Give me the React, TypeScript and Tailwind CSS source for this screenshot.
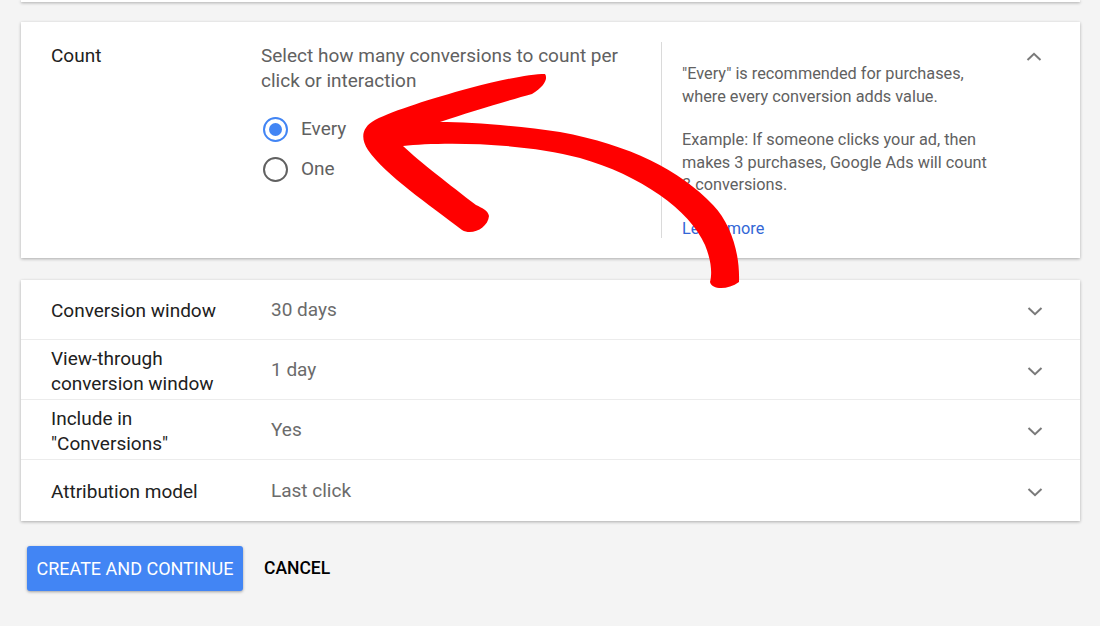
import React from "react";

const Chevron: React.FC<{ up?: boolean }> = ({ up }) => (
  <svg
    viewBox="0 0 24 24"
    className="w-6 h-6 shrink-0"
    fill="none"
    stroke="#7a7a7a"
    strokeWidth="2"
  >
    {up ? <path d="M5.5 15 12 8.8 18.5 15" /> : <path d="M5.5 9 12 15.2 18.5 9" />}
  </svg>
);

const Radio: React.FC<{ checked?: boolean; label: string }> = ({ checked, label }) => (
  <label className="flex items-center h-10 gap-[13px] ml-[2px] text-[19px] text-[#616161]">
    <span
      className={
        checked
          ? "w-[25px] h-[25px] rounded-full border-2 border-[#4285f4] flex items-center justify-center"
          : "w-[25px] h-[25px] rounded-full border-2 border-[#616161] flex items-center justify-center"
      }
    >
      {checked && <span className="w-[13px] h-[13px] rounded-full bg-[#4285f4]" />}
    </span>
    {label}
  </label>
);

type SettingRow = {
  label: React.ReactNode;
  value: string;
};

const rows: SettingRow[] = [
  { label: "Conversion window", value: "30 days" },
  {
    label: (
      <>
        View-through
        <br />
        conversion window
      </>
    ),
    value: "1 day",
  },
  {
    label: (
      <>
        Include in
        <br />
        "Conversions"
      </>
    ),
    value: "Yes",
  },
  { label: "Attribution model", value: "Last click" },
];

// hand-drawn annotation arrow over the count section
const RedArrow: React.FC = () => (
  <svg
    viewBox="0 0 1100 626"
    className="absolute inset-0 w-[1100px] h-[626px] pointer-events-none"
  >
    <path
      fill="#ff0000"
      d="M545,74
         C530,74 500,80 470,88
         C430,99 395,110 375,120
         C362,127 360,138 368,150
         C385,175 430,205 462,230
         C472,236 488,228 489,216
         C488,210 482,208 476,205
         C450,185 420,162 403,146
         C440,142 520,142 580,158
         C640,175 690,210 705,245
         C712,262 712,275 710,282
         C712,290 728,290 739,282
         C740,255 732,225 713,205
         C680,170 630,145 560,132
         C520,126 470,122 440,122
         C470,112 510,100 532,94
         C545,86 548,78 545,74 Z"
    />
  </svg>
);

export default function App() {
  return (
    <div className="relative w-[1100px] h-[626px] overflow-hidden bg-[#f4f4f4] font-['Roboto',sans-serif]">
      <div className="pr-[20px] pl-[21px]">
        <div className="h-[2px] bg-white shadow-[0_1px_3px_rgba(0,0,0,0.35)]" />

        {/* Count section, expanded */}
        <div className="mt-5 h-[236px] bg-white shadow-[0_1px_3px_rgba(0,0,0,0.3)] flex py-5">
          <div className="w-[240px] pl-[30px] pt-[1px] text-[19px] leading-[25px] text-[#212121]">
            Count
          </div>
          <div className="w-[400px] pr-5">
            <p className="text-[19px] leading-[25px] text-[#616161] pt-[1px]">
              Select how many conversions to count per click or interaction
            </p>
            <div className="mt-[16px] flex flex-col">
              <Radio checked label="Every" />
              <Radio label="One" />
            </div>
          </div>
          <div className="border-l border-[#dadada] pl-5 pt-[21px] w-[333px] text-[16.3px] leading-[22.5px] text-[#616161]">
            <p>"Every" is recommended for purchases, where every conversion adds value.</p>
            <p className="mt-[21px]">
              Example: If someone clicks your ad, then makes 3 purchases, Google Ads will count 3
              conversions.
            </p>
            <a className="block mt-[21px] text-[#3367d6]">Learn more</a>
          </div>
          <div className="flex-1 flex justify-end pr-[34px]">
            <div className="mt-[3px]">
              <Chevron up />
            </div>
          </div>
        </div>

        {/* Collapsed settings */}
        <div className="mt-[22px] bg-white shadow-[0_1px_3px_rgba(0,0,0,0.3)]">
          {rows.map((row, i) => (
            <div
              key={i}
              className={
                i < rows.length - 1
                  ? "h-[60px] flex items-center pt-[2px] border-b border-[#ececec]"
                  : "h-[61px] flex items-center pt-[2px]"
              }
            >
              <div className="w-[250px] pl-[30px] text-[19px] leading-[25px] text-[#212121]">
                {row.label}
              </div>
              <div className="flex-1 text-[19px] text-[#6b6b6b]">{row.value}</div>
              <div className="pr-[33px]">
                <Chevron />
              </div>
            </div>
          ))}
        </div>

        <div className="mt-[25px] flex items-center gap-[21px] pl-[6px]">
          <button className="h-[45px] w-[216px] bg-[#4285f4] text-white text-[18px] rounded-[3px] shadow-[0_1px_3px_rgba(0,0,0,0.35)]">
            CREATE AND CONTINUE
          </button>
          <button className="text-[17.5px] font-medium text-black">CANCEL</button>
        </div>
      </div>
      <RedArrow />
    </div>
  );
}
